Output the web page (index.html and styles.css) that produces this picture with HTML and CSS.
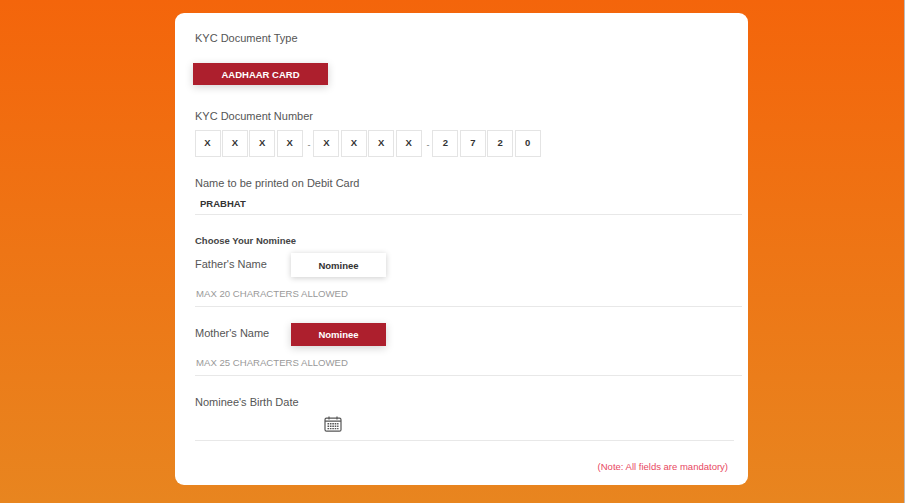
FILE: index.html
```html
<!DOCTYPE html>
<html lang="en">
<head>
  <meta charset="UTF-8" />
  <title>KYC Details</title>
  <link rel="stylesheet" href="styles.css">
</head>
<body>
  <div class="card">
    <div class="label doc-type">KYC Document Type</div>
    <button class="btn active doc-btn">AADHAAR CARD</button>

    <div class="label doc-number">KYC Document Number</div>
    <div class="digits">
      <span class="digit">X</span><span class="digit">X</span><span class="digit">X</span><span class="digit">X</span>
      <span class="dash">-</span>
      <span class="digit">X</span><span class="digit">X</span><span class="digit">X</span><span class="digit">X</span>
      <span class="dash">-</span>
      <span class="digit">2</span><span class="digit">7</span><span class="digit">2</span><span class="digit">0</span>
    </div>

    <div class="label print-name">Name to be printed on Debit Card</div>
    <div class="name-value">PRABHAT</div>

    <div class="nominee-title">Choose Your Nominee</div>

    <div class="nominee-row father">
      <span class="label">Father's Name</span>
      <button class="btn plain">Nominee</button>
    </div>
    <div class="hint">MAX 20 CHARACTERS ALLOWED</div>

    <div class="nominee-row mother">
      <span class="label">Mother's Name</span>
      <button class="btn active">Nominee</button>
    </div>
    <div class="hint">MAX 25 CHARACTERS ALLOWED</div>

    <div class="label birth-label">Nominee's Birth Date</div>
    <div class="birth-field">
      <svg class="cal" width="18" height="16" viewBox="0 0 18 16" fill="none" stroke="#555" stroke-width="1.2">
        <rect x="1" y="2.2" width="16" height="13" rx="1.5" />
        <path d="M1 5.2h16M5 .5v3M13 .5v3" />
        <path d="M3.5 7.8h11M3.5 10.2h11M3.5 12.6h11" stroke-width="1.4" stroke-dasharray="1.6 .8" />
      </svg>
    </div>

    <div class="note">(Note: All fields are mandatory)</div>
  </div>
</body>
</html>
```

FILE: styles.css
```css
html, body {
  height: 100%;
}

body {
  margin: 0;
  font-family: "Liberation Sans", Arial, sans-serif;
  background: linear-gradient(to bottom, #f4650b, #e8851f);
  box-sizing: border-box;
  padding-top: 13px;
  overflow: hidden;
  border-right: 1px solid #bbb;
}

.card {
  width: 573px;
  height: 472px;
  box-sizing: border-box;
  margin-left: 175px;
  padding: 18px 0 0 20px;
  background-color: #fff;
  border-radius: 9px;
}

.label {
  font-size: 11px;
  line-height: 14px;
  color: #555;
}

.btn {
  display: block;
  width: 95px;
  height: 23px;
  padding: 0;
  border: none;
  font-family: inherit;
  font-size: 9.5px;
  font-weight: bold;
}

.btn.active {
  background-color: #ad1f2d;
  color: #fff;
  box-shadow: 0 2px 8px rgba(0,0,0,0.18);
}

.btn.plain {
  height: 24px;
  background-color: #fff;
  color: #333;
  box-shadow: 0 1px 6px rgba(0,0,0,0.2);
}

.doc-btn {
  width: 135px;
  height: 22px;
  margin: 18px 0 0 -2px;
}

.doc-number {
  margin-top: 24px;
}

.digits {
  display: flex;
  align-items: center;
  gap: 1.4px;
  margin-top: 7px;
  margin-left: -0.5px;
}

.digit {
  width: 26px;
  height: 27px;
  border: 1px solid #e4e4e4;
  box-sizing: border-box;
  font-size: 9.5px;
  font-weight: bold;
  line-height: 24px;
  text-align: center;
  color: #333;
}

.dash {
  width: 6px;
  margin: 2px 0 0 2px;
  font-size: 9px;
  text-align: center;
  color: #777;
}

.print-name {
  margin-top: 19px;
}

.name-value {
  height: 16px;
  margin: 8px 6px 0 0;
  padding-left: 5px;
  border-bottom: 1px solid #e8e8e8;
  font-size: 9.5px;
  font-weight: bold;
  line-height: 12px;
  color: #333;
}

.nominee-title {
  margin-top: 20px;
  font-size: 9.5px;
  font-weight: bold;
  line-height: 11px;
  color: #444;
}

.nominee-row {
  display: flex;
  align-items: center;
}

.nominee-row .label {
  width: 96px;
}

.father {
  margin-top: 7px;
}

.father .label {
  margin-top: -3px;
}

.mother {
  margin-top: 16px;
}

.mother .label {
  margin-top: -3px;
}

.hint {
  height: 18px;
  margin: 11px 6px 0 0;
  padding-left: 1px;
  border-bottom: 1px solid #e8e8e8;
  font-size: 9.6px;
  line-height: 12px;
  color: #999;
}

.birth-label {
  margin-top: 19px;
}

.birth-field {
  display: flex;
  height: 24px;
  margin: 7px 14px 0 0;
  padding-left: 129px;
  border-bottom: 1px solid #e8e8e8;
}

.cal {
  margin-top: 0;
}

.note {
  margin: 20px 20px 0 0;
  font-size: 9.5px;
  line-height: 12px;
  text-align: right;
  color: #e8485f;
}
```
